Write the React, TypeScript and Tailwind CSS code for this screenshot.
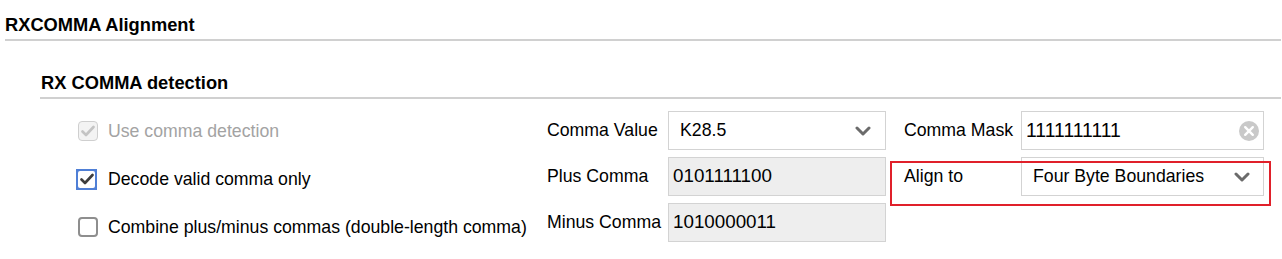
import React from "react";

const Chevron: React.FC = () => (
  <svg width="16" height="10" viewBox="0 0 16 10" className="shrink-0">
    <path d="M2 2 L8 8 L14 2" fill="none" stroke="#6b6b6b" strokeWidth="3" strokeLinecap="round" strokeLinejoin="round" />
  </svg>
);

const Check: React.FC<{ color: string }> = ({ color }) => (
  <svg width="14" height="12" viewBox="0 0 14 12">
    <path d="M1.5 6.5 L5 10 L12.5 2" fill="none" stroke={color} strokeWidth="2.6" strokeLinecap="round" strokeLinejoin="round" />
  </svg>
);

const ClearIcon: React.FC = () => (
  <svg width="20" height="20" viewBox="0 0 20 20" className="shrink-0">
    <circle cx="10" cy="10" r="10" fill="#c9c9c9" />
    <path d="M6.2 6.2 L13.8 13.8 M13.8 6.2 L6.2 13.8" stroke="#ffffff" strokeWidth="2.4" strokeLinecap="round" />
  </svg>
);

const App: React.FC = () => {
  return (
    <div className="w-[1282px] h-[259px] bg-white overflow-hidden text-[17.7px] text-black font-['Liberation_Sans',Arial,sans-serif]">
      {/* top heading */}
      <div className="ml-[5px] mr-[1px] pt-[14px] pb-[3px] leading-[22px] text-[18.3px] font-bold border-b-2 border-[#d0d0d0]">
        RXCOMMA Alignment
      </div>

      <div className="ml-[40px] mr-[1px]">
        <div className="mt-[31px] pl-[1px] pb-[3px] leading-[22px] text-[18.3px] font-bold border-b-2 border-[#d0d0d0]">
          RX COMMA detection
        </div>

        <div className="flex items-start pt-[12px]">
          {/* checkboxes */}
          <div className="w-[507px] pl-[38px] pt-[10px] flex flex-col gap-[28px]">
            <div className="flex items-center gap-[10px] h-[20px]">
              <div className="w-[20px] h-[20px] rounded-[4px] border border-[#cfcfcf] bg-[#f3f3f3] flex items-center justify-center">
                <Check color="#c4c4c4" />
              </div>
              <span className="text-[#a3a3a3] leading-[20px]">Use comma detection</span>
            </div>
            <div className="flex items-center gap-[10px] h-[20px]">
              <div className="w-[21px] h-[21px] -ml-[2px] mr-[1px] bg-[#4f7fd6] p-[2px]">
                <div className="w-full h-full bg-white rounded-[2px] flex items-center justify-center">
                  <Check color="#3d3d3d" />
                </div>
              </div>
              <span className="leading-[20px]">Decode valid comma only</span>
            </div>
            <div className="flex items-center gap-[10px] h-[20px]">
              <div className="w-[20px] h-[20px] rounded-[4px] border-2 border-[#8e8e8e] bg-white" />
              <span className="leading-[20px]">Combine plus/minus commas (double-length comma)</span>
            </div>
          </div>

          {/* fields */}
          <div className="grid grid-cols-[121px_218px_18px_117px_243px] grid-rows-[39px_39px_39px] gap-y-[7px]">
            <div className="flex items-center">Comma Value</div>
            <div className="flex items-center justify-between border border-[#d3d3d3] bg-white pl-[11px] pr-[14px]">
              <span>K28.5</span>
              <Chevron />
            </div>
            <div />
            <div className="flex items-center">Comma Mask</div>
            <div className="flex items-center justify-between border border-[#d3d3d3] bg-white pl-[4px] pr-[4px]">
              <span className="text-[19.4px]">1111111111</span>
              <ClearIcon />
            </div>

            <div className="flex items-center">Plus Comma</div>
            <div className="flex items-center border border-[#d3d3d3] bg-[#eeeeee] pl-[4px] text-[18.8px]">0101111100</div>
            <div />
            <div className="relative col-span-2 grid grid-cols-[117px_243px]">
              <div className="flex items-center">Align to</div>
              <div className="flex items-center justify-between border border-[#d3d3d3] bg-white pl-[11px] pr-[13px]">
                <span>Four Byte Boundaries</span>
                <Chevron />
              </div>
              <div className="absolute left-[-14px] top-[4px] w-[381px] h-[45px] border-2 border-[#e0202a] pointer-events-none" />
            </div>

            <div className="flex items-center">Minus Comma</div>
            <div className="flex items-center border border-[#d3d3d3] bg-[#eeeeee] pl-[4px] text-[18.8px]">1010000011</div>
            <div />
            <div className="col-span-2" />
          </div>
        </div>
      </div>
    </div>
  );
};

export default App;
